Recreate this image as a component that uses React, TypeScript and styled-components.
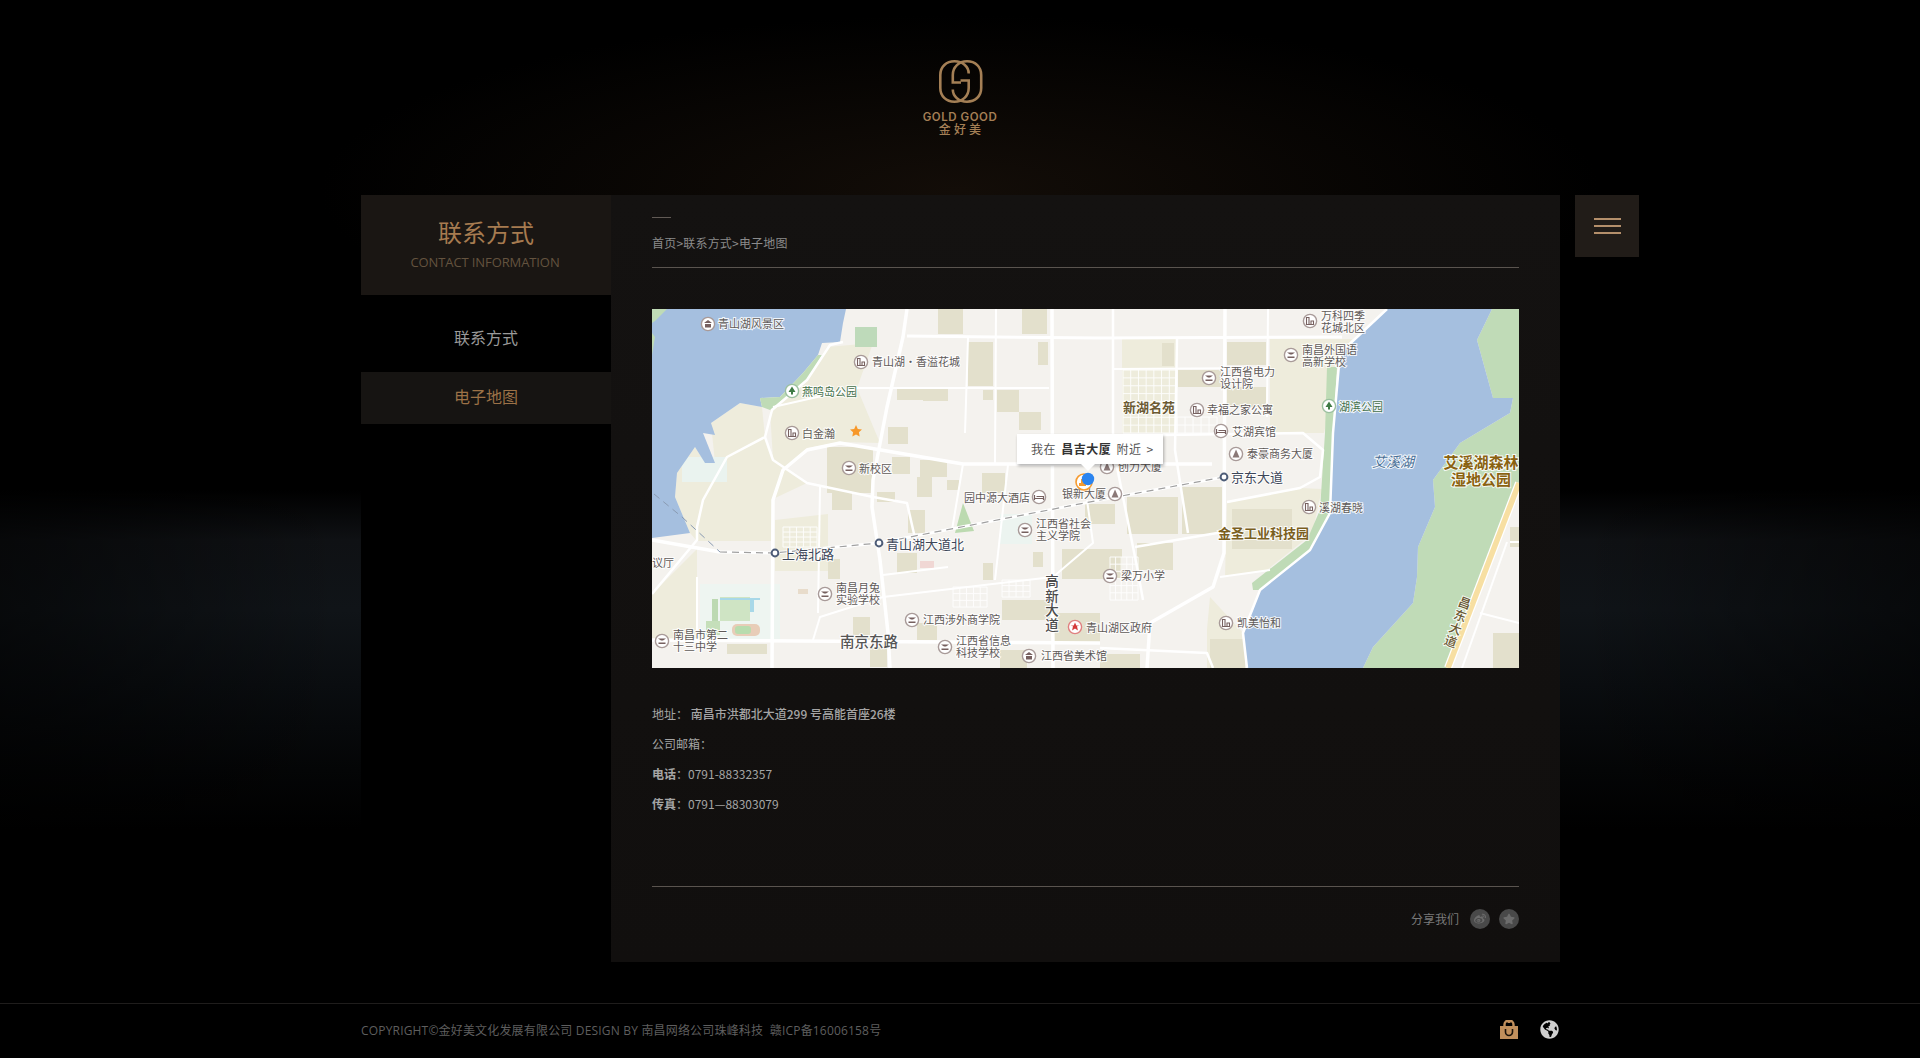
import React from "react";
import styled, { createGlobalStyle } from "styled-components";
import { FaWeibo, FaStar, FaGlobeAmericas } from "react-icons/fa";

const CJK = `"Noto Sans CJK SC", "Open Sans", sans-serif`;

const Global = createGlobalStyle`
  html, body { margin: 0; padding: 0; background: #000; }
  body { font-family: "Open Sans", ${CJK}; overflow: hidden; }
  * { box-sizing: border-box; }
`;

const Page = styled.div`
  width: 1920px;
  height: 1058px;
  overflow: hidden;
  background:
    linear-gradient(90deg, rgba(0, 0, 0, 0.55) 0, rgba(0, 0, 0, 0) 340px, rgba(0, 0, 0, 0) 1580px, rgba(0, 0, 0, 0.55) 100%),
    radial-gradient(ellipse 640px 175px at 50% 190px, #130d08 0%, rgba(20, 13, 8, 0) 100%),
    linear-gradient(180deg, #000 490px, #0f1114 540px, #101418 610px, #0a0d10 685px, #040506 770px, #000 830px);
`;
const Header = styled.header`
  height: 195px;
  padding-top: 60px;
  display: flex;
  flex-direction: column;
  align-items: center;
`;
const LogoMark = styled.svg`
  display: block;
  margin-left: 1px;
`;
const LogoEn = styled.div`
  margin-top: 8px;
  font: 600 11.5px/12px Inter, sans-serif;
  letter-spacing: 0.55px;
  color: #a47f55;
`;
const LogoCn = styled.div`
  margin-top: -1px;
  font: 500 12px/13px ${CJK};
  letter-spacing: 3.2px;
  padding-left: 3px;
  color: #a47f55;
`;
const Main = styled.main`
  display: flex;
  margin-left: 361px;
`;
const Sidebar = styled.aside`
  width: 250px;
  height: 767px;
  background: #000;
`;
const SideHead = styled.div`
  height: 100px;
  background: #1a1613;
  text-align: center;
  padding-top: 21px;
`;
const SideTitle = styled.h2`
  margin: 0;
  font: 400 24px/32px ${CJK};
  color: #a67b50;
`;
const SideSub = styled.div`
  margin-top: 5px;
  padding-right: 2px;
  font: 400 13px/18px "Open Sans", sans-serif;
  letter-spacing: -0.1px;
  color: #64533f;
`;
const SideItem = styled.div<{ $active?: boolean; $h: number }>`
  height: ${(p) => p.$h}px;
  display: flex;
  align-items: center;
  justify-content: center;
  padding: ${(p) => (p.$active ? "0 0 4px" : "7px 0 0")};
  font: 400 16px ${CJK};
  color: ${(p) => (p.$active ? "#9c7247" : "#9a9a9a")};
  background: ${(p) => (p.$active ? "#161412" : "transparent")};
`;
const Panel = styled.section`
  width: 949px;
  height: 767px;
  padding: 22px 41px 0;
  background: linear-gradient(180deg, #141211 0%, #110f0e 100%);
`;
const Dash = styled.div`
  width: 19px;
  height: 1px;
  background: #615a55;
`;
const Crumb = styled.div`
  margin-top: 13px;
  padding-bottom: 12px;
  border-bottom: 1px solid #5a544f;
  font: 400 12px/24px ${CJK};
  letter-spacing: 0.2px;
  color: #8b8b8b;
`;
const MapBox = styled.div`
  position: relative;
  margin-top: 41px;
  width: 867px;
  height: 359px;
  overflow: hidden;
  background: #f4f2ee;
`;
const MapSvg = styled.svg`
  display: block;
  width: 867px;
  height: 359px;
`;
const MapText = styled.text<{ $s?: number; $c?: string; $w?: number; $i?: boolean; $v?: boolean }>`
  font-family: ${CJK};
  font-size: ${(p) => p.$s ?? 11}px;
  font-weight: ${(p) => p.$w ?? 400};
  font-style: ${(p) => (p.$i ? "italic" : "normal")};
  fill: ${(p) => p.$c ?? "#5f5a58"};
  stroke: rgba(255, 255, 255, 0.85);
  stroke-width: 2px;
  paint-order: stroke;
  ${(p) => (p.$v ? "writing-mode: vertical-rl; letter-spacing: 1.2px;" : "")}
`;
const Bubble = styled.div`
  position: absolute;
  left: 365px;
  top: 125px;
  width: 146px;
  height: 30px;
  padding: 0 0 2px 14px;
  background: #fff;
  box-shadow: 1px 2px 3px rgba(0, 0, 0, 0.3);
  display: flex;
  align-items: center;
  font: 400 12px ${CJK};
  letter-spacing: 0.5px;
  word-spacing: 2px;
  color: #555;
  white-space: pre;
  &::after {
    content: "";
    position: absolute;
    left: 64px;
    bottom: -7px;
    width: 0;
    height: 0;
    border-left: 7px solid transparent;
    border-right: 7px solid transparent;
    border-top: 7px solid #fff;
  }
`;
const BubbleName = styled.b`
  font-weight: 700;
  color: #333;
`;
const Info = styled.div`
  margin-top: 31px;
  font: 400 12px/30px ${CJK};
  color: #a5a5a5;
`;
const InfoLine = styled.div`
  height: 30px;
  white-space: pre;
`;
const InfoLabel = styled.b`
  font-weight: 700;
`;
const InfoMed = styled.span`
  font-weight: 500;
`;
const ShareRow = styled.div`
  margin-top: 67px;
  border-top: 1px solid #5a544f;
  padding-top: 22px;
  display: flex;
  justify-content: flex-end;
  align-items: center;
  gap: 9px;
  font: 400 12px/20px ${CJK};
  color: #7a7a7a;
`;
const ShareText = styled.span`
  margin-right: 2px;
`;
const ShareBtn = styled.span`
  width: 20px;
  height: 20px;
  border-radius: 50%;
  background: #494949;
  color: #6c6c6c;
  display: flex;
  align-items: center;
  justify-content: center;
  font-size: 12px;
`;
const MenuBtn = styled.button`
  width: 64px;
  height: 62px;
  margin-left: 15px;
  padding: 0;
  border: 0;
  background: #211c18;
  display: flex;
  flex-direction: column;
  align-items: center;
  justify-content: center;
  gap: 5px;
`;
const MenuLine = styled.span`
  display: block;
  width: 27px;
  height: 2px;
  background: #b48f6b;
`;
const Footer = styled.footer`
  margin-top: 41px;
  height: 55px;
  border-top: 1px solid #1f1d1c;
  padding: 0 361px 3px 361px;
  display: flex;
  align-items: center;
  justify-content: space-between;
`;
const Copy = styled.div`
  font: 400 12px "Open Sans", ${CJK};
  letter-spacing: 0.18px;
  color: #5e5e5e;
  white-space: pre;
`;
const FootIcons = styled.div`
  display: flex;
  align-items: center;
  gap: 22px;
`;
const Globe = styled(FaGlobeAmericas)`
  width: 19px;
  height: 19px;
  color: #cfcfcf;
`;

const GPath = "M29.7 13.5C29.7 6.5 23.5 1.3 15.5 1.3C7.5 1.3 1.3 6.5 1.3 15V28C1.3 36 7 41.7 15.5 41.7C23.5 41.7 29.7 36 29.7 28V20.5H21.5";

const Logo = () => (
  <LogoMark width="44" height="43" viewBox="0 0 44 43" fill="none" stroke="#a47f55" strokeWidth="2.6">
    <path d={GPath} />
    <path d={GPath} transform="rotate(180 21.75 21.5)" />
  </LogoMark>
);

const Bag = () => (
  <svg width="18" height="19" viewBox="0 0 18 19">
    <path d="M0 6h18v13H0z" fill="#c08f5c" />
    <path d="M4.5 6V4.5a4.5 4 0 0 1 9 0V6" fill="none" stroke="#c08f5c" strokeWidth="2.4" />
    <path d="M5.5 9v3a3.5 3.5 0 0 0 7 0V9" fill="none" stroke="#1a120a" strokeWidth="1.6" />
    <path d="M7.5 0h3v3h-3z" fill="#c08f5c" />
  </svg>
);

type Pt = number[];
const pts = (a: Pt) => a.join(" ");

const Grid = ({ x, y, w, h, nx, ny }: { x: number; y: number; w: number; h: number; nx: number; ny: number }) => (
  <g stroke="#fff" strokeWidth="1" opacity="0.9">
    {Array.from({ length: nx + 1 }, (_, i) => (
      <line key={"v" + i} x1={x + (w * i) / nx} y1={y} x2={x + (w * i) / nx} y2={y + h} />
    ))}
    {Array.from({ length: ny + 1 }, (_, i) => (
      <line key={"h" + i} x1={x} y1={y + (h * i) / ny} x2={x + w} y2={y + (h * i) / ny} />
    ))}
  </g>
);

type Kind = "b" | "s" | "h" | "p" | "g" | "m" | "t";
const Poi = ({ x, y, k }: { x: number; y: number; k: Kind }) => {
  const c = k === "p" ? "#3f7a45" : k === "g" ? "#d43a3a" : "#76605f";
  return (
    <g transform={`translate(${x} ${y})`}>
      <circle r="6.6" fill="#fff" stroke={k === "p" ? "#9cc0a0" : k === "g" ? "#e08080" : "#a89a98"} strokeWidth="1.4" />
      {k === "b" && <path d="M-3.5 3.5V-3.5H-1V3.5H1V0H3.5V3.5Z" fill="none" stroke={c} strokeWidth="1.1" />}
      {k === "s" && <path d="M-4-2.5H4L1-.5H-1ZM-3.5 1.5H3.5V3H-3.5Z" fill={c} />}
      {k === "h" && <path d="M-4.5-2V3M-4.5 1.5H4.5V3M-2.5-.5H4.5V1.5" fill="none" stroke={c} strokeWidth="1.2" />}
      {k === "p" && <path d="M0-4.5L3.5 1H1V3.5H-1V1H-3.5Z" fill={c} />}
      {k === "g" && <path d="M0-4.5L1.3-1.4L4.5-1.2L2-.8L2.9 3.6L0 1.6L-2.9 3.6L-2-.8L-4.5-1.2L-1.3-1.4Z" fill={c} />}
      {k === "m" && <path d="M-4-1L0-4L4-1ZM-3 0H3V3.5H-3Z" fill={c} />}
      {k === "t" && <path d="M0-4.5L3.5 3.5H-3.5Z" fill={c} opacity="0.85" />}
    </g>
  );
};

const Station = ({ x, y }: { x: number; y: number }) => (
  <circle cx={x} cy={y} r="3.4" fill="#fff" stroke="#4e5d78" strokeWidth="2" />
);

const TwoLines = ({ x, y, a, b }: { x: number; y: number; a: string; b: string }) => (
  <MapText x={x} y={y}>
    {a}
    <tspan x={x} dy={12}>{b}</tspan>
  </MapText>
);

const beigeAreas: Pt[] = [
  [118, 101, 155, 71, 175, 38, 221, 34, 205, 79, 228, 134, 188, 133, 155, 139, 131, 161, 121, 151],
  [59, 114, 88, 94, 110, 98, 113, 128, 75, 148, 63, 154],
  [25, 164, 43, 138, 53, 154, 75, 148, 113, 128, 121, 151, 155, 174, 121, 190, 120, 232, 45, 232, 38, 224, 23, 188],
  [618, 30, 700, 30, 686, 58, 672, 124, 618, 124],
  [575, 194, 648, 179, 670, 180, 660, 225, 615, 261, 573, 268],
  [558, 288, 591, 324, 595, 359, 555, 359, 555, 320],
  [123, 211, 176, 205, 176, 262, 123, 262],
  [470, 30, 525, 30, 525, 124, 470, 124],
  [0, 285, 45, 240, 45, 331, 0, 331],
];
const blocks: Pt[] = [
  [286, 0, 25, 25], [370, 0, 25, 25], [316, 33, 25, 44], [386, 33, 10, 23], [345, 81, 22, 22], [367, 103, 22, 18],
  [236, 118, 20, 17], [245, 79, 27, 12], [271, 79, 25, 13], [331, 81, 10, 10], [175, 138, 46, 46], [240, 148, 18, 17],
  [268, 151, 27, 17], [265, 168, 15, 20], [295, 171, 12, 10], [330, 164, 23, 20], [225, 183, 18, 10], [256, 201, 17, 23],
  [180, 184, 20, 17], [331, 254, 10, 17], [381, 243, 10, 15], [176, 250, 12, 20], [245, 244, 20, 20], [201, 308, 17, 23],
  [218, 338, 17, 20], [350, 291, 48, 20], [401, 304, 47, 30], [265, 314, 20, 17], [348, 341, 27, 18], [75, 335, 40, 10],
  [575, 33, 39, 23], [575, 78, 39, 20], [526, 61, 43, 17], [475, 188, 51, 37], [530, 178, 40, 47], [580, 200, 60, 40],
  [485, 234, 36, 27], [510, 34, 12, 23], [558, 330, 35, 29], [448, 345, 40, 14],
  [841, 324, 26, 35], [858, 218, 9, 20], [410, 240, 60, 30], [433, 195, 30, 20],
];
const roads: { p: Pt; w: number }[] = [
  { p: [255, 0, 251, 28, 235, 98, 221, 171, 220, 198, 228, 251, 236, 324, 238, 359], w: 3.5 },
  { p: [560, 155, 448, 155, 311, 155, 188, 134, 155, 141, 131, 161, 121, 191, 120, 359], w: 3.5 },
  { p: [191, 33, 178, 36, 155, 71, 120, 101, 113, 128, 75, 148, 51, 191, 45, 218, 45, 231, 0, 285], w: 2.5 },
  { p: [113, 128, 121, 151, 155, 174, 221, 188, 255, 194, 265, 238], w: 2.5 },
  { p: [255, 27, 448, 29, 690, 28], w: 3 },
  { p: [121, 98, 205, 79, 397, 79], w: 2 },
  { p: [344, 0, 343, 155], w: 2 },
  { p: [400, 0, 401, 359], w: 3.5 },
  { p: [316, 29, 313, 124], w: 2 },
  { p: [311, 155, 300, 221], w: 2 },
  { p: [356, 156, 343, 271], w: 2 },
  { p: [231, 266, 296, 258], w: 2 },
  { p: [231, 288, 401, 268, 441, 234, 435, 191], w: 2 },
  { p: [0, 331, 448, 334], w: 3.5 },
  { p: [45, 268, 45, 331], w: 2 },
  { p: [161, 331, 168, 308, 231, 288], w: 2 },
  { p: [168, 178, 166, 304], w: 2 },
  { p: [573, 0, 572, 244, 561, 278, 498, 314, 495, 359], w: 3.5 },
  { p: [461, 0, 461, 124, 465, 158, 485, 258, 491, 291], w: 2.5 },
  { p: [525, 29, 523, 141, 536, 224], w: 2.5 },
  { p: [616, 0, 615, 108], w: 2 },
  { p: [461, 60, 618, 59], w: 2 },
  { p: [511, 126, 651, 124, 671, 141, 668, 168, 648, 179, 575, 193], w: 2.5 },
  { p: [483, 238, 571, 223], w: 2.5 },
  { p: [568, 268, 618, 261], w: 2 },
  { p: [448, 339, 555, 344, 561, 359], w: 2.5 },
  { p: [735, 0, 688, 44, 681, 124, 678, 204, 658, 241, 608, 281, 591, 324, 595, 359], w: 2.5 },
  { p: [0, 231, 68, 243], w: 3.5 },
  { p: [810, 359, 855, 233], w: 2 },
  { p: [828, 304, 867, 314], w: 2 },
  { p: [858, 233, 867, 233], w: 2 },
];

const MapDrawing = () => (
  <MapSvg viewBox="0 0 867 359">
    <rect width="867" height="359" fill="#f4f2ee" />
    {beigeAreas.map((a, i) => (
      <polygon key={i} points={pts(a)} fill="#eeecdc" />
    ))}
    <rect x="48" y="275" width="80" height="55" fill="#eef5f1" />
    <rect x="30" y="148" width="45" height="25" fill="#eaf3ef" />
    <rect x="348" y="205" width="32" height="30" fill="#ecf4f0" />
    <rect x="60" y="290" width="6" height="24" fill="#bcd9b2" />
    <rect x="68" y="288" width="30" height="24" fill="#cfe4c4" />
    <rect x="68" y="289" width="40" height="2" fill="#a8d8e8" />
    <rect x="98" y="289" width="4" height="14" fill="#a8d8e8" />
    <rect x="80" y="315" width="28" height="12" rx="5" fill="#e8cdb8" />
    <rect x="83" y="317" width="16" height="8" rx="3" fill="#b8dcae" />
    <rect x="54" y="312" width="14" height="14" fill="#c5dfba" />
    <rect x="268" y="252" width="14" height="7" fill="#f0d7d4" />
    <rect x="146" y="280" width="10" height="5" fill="#e8dccb" />
    {blocks.map((b, i) => (
      <rect key={i} x={b[0]} y={b[1]} width={b[2]} height={b[3]} fill="#e3e0cc" />
    ))}
    <rect x="203" y="18" width="22" height="20" fill="#bedaba" />
    <polygon points="303,224 311,194 322,222" fill="#bcdab0" />
    <polygon points="0,0 194,0 191,14 188,33 170,34 166,46 151,64 128,88 108,89 110,98 88,94 59,114 63,126 51,124 63,154 53,154 43,138 25,164 23,188 38,224 0,229" fill="#a5bfdf" />
    <polygon points="0,0 15,0 3,12 0,14" fill="#bfdbb6" />
    <polygon points="0,24 3,28 0,46" fill="#bfdbb6" />
    <polygon points="166,46 151,64 128,88 108,89 110,98 118,101 155,71 170,46" fill="#bfdbb6" />
    <polygon points="840,0 867,0 867,174 796,359 711,359 721,338 761,294 765,268 766,238 783,198 781,171 808,134 858,104 861,89 841,89 825,31" fill="#c0dbb7" />
    <polygon points="735,0 688,44 681,124 678,204 658,241 608,281 591,324 595,359 711,359 721,338 761,294 765,268 766,238 783,198 781,171 808,134 858,104 861,89 841,89 825,31 840,0" fill="#a5bfdf" />
    <polygon points="675,58 685,58 681,124 678,204 658,241 608,281 601,281 600,274 655,231 668,201 673,124" fill="#bfdbb6" />
    <Grid x={471} y={61} w={54} h={63} nx={7} ny={8} />
    <Grid x={131} y={218} w={34} h={20} nx={5} ny={4} />
    <Grid x={458} y={248} w={28} h={43} nx={5} ny={6} />
    <Grid x={301} y={278} w={34} h={20} nx={5} ny={3} />
    <Grid x={350} y={271} w={28} h={17} nx={4} ny={3} />
    <Grid x={525} y={108} w={40} h={16} nx={5} ny={2} />
    {roads.map((r, i) => (
      <polyline key={i} points={pts(r.p)} fill="none" stroke="#fff" strokeWidth={r.w} strokeLinejoin="round" />
    ))}
    <polyline points="796,359 867,174" fill="none" stroke="#fff" strokeWidth="8" />
    <polyline points="796,359 867,174" fill="none" stroke="#f7dfa2" strokeWidth="5.5" />
    <polyline points="68,243 122,244 227,234 448,191 572,168" fill="none" stroke="#fff" strokeWidth="3" />
    <polyline points="68,243 122,244 227,234 448,191 572,168" fill="none" stroke="#a0a0a0" strokeWidth="1.2" strokeDasharray="7 5" />
    <polyline points="2,185 30,208 68,243" fill="none" stroke="#8a9bb2" strokeWidth="1" strokeDasharray="7 5" />

    <Poi x={56} y={15} k="m" /><MapText x={66} y={19}>青山湖风景区</MapText>
    <Poi x={209} y={53} k="b" /><MapText x={220} y={57}>青山湖·香溢花城</MapText>
    <Poi x={140} y={82} k="p" /><MapText x={150} y={87} $c="#44704a">燕鸣岛公园</MapText>
    <Poi x={140} y={124} k="b" /><MapText x={150} y={129}>白金瀚</MapText>
    <Poi x={197} y={159} k="s" /><MapText x={207} y={164}>新校区</MapText>
    <Poi x={387} y={188} k="h" /><MapText x={312} y={193}>园中源大酒店</MapText>
    <Poi x={373} y={221} k="s" /><TwoLines x={384} y={219} a="江西省社会" b="主义学院" />
    <Poi x={173} y={285} k="s" /><TwoLines x={184} y={283} a="南昌月兔" b="实验学校" />
    <Poi x={260} y={311} k="s" /><MapText x={271} y={315}>江西涉外商学院</MapText>
    <Poi x={10} y={332} k="s" /><TwoLines x={21} y={330} a="南昌市第二" b="十三中学" />
    <Poi x={293} y={338} k="s" /><TwoLines x={304} y={336} a="江西省信息" b="科技学校" />
    <Poi x={377} y={347} k="m" /><MapText x={389} y={351}>江西省美术馆</MapText>
    <Poi x={423} y={318} k="g" /><MapText x={434} y={323}>青山湖区政府</MapText>
    <MapText x={0} y={258}>议厅</MapText>
    <Station x={123} y={244} /><MapText x={130} y={250} $s={13} $c="#3c4658">上海北路</MapText>
    <Station x={227} y={234} /><MapText x={234} y={240} $s={13} $c="#3c4658">青山湖大道北</MapText>
    <Station x={572} y={168} /><MapText x={579} y={173} $s={13} $c="#3c4658">京东大道</MapText>
    <MapText x={188} y={338} $s={14.5} $w={500} $c="#555">南京东路</MapText>
    <MapText x={400} y={265} $s={13.5} $w={500} $c="#4c4c4c" $v>高新大道</MapText>
    <MapText x={410} y={189}>银新大厦</MapText><Poi x={463} y={185} k="t" />
    <Poi x={455} y={158} k="t" /><MapText x={466} y={162}>创力大厦</MapText>
    <Poi x={658} y={12} k="b" /><TwoLines x={669} y={11} a="万科四季" b="花城北区" />
    <Poi x={639} y={46} k="s" /><TwoLines x={650} y={45} a="南昌外国语" b="高新学校" />
    <Poi x={557} y={69} k="s" /><TwoLines x={568} y={67} a="江西省电力" b="设计院" />
    <MapText x={471} y={103} $s={13} $w={700} $c="#6b5a33">新湖名苑</MapText>
    <Poi x={545} y={101} k="b" /><MapText x={555} y={105}>幸福之家公寓</MapText>
    <Poi x={677} y={97} k="p" /><MapText x={687} y={102} $c="#44704a">湖滨公园</MapText>
    <Poi x={569} y={122} k="h" /><MapText x={580} y={127}>艾湖宾馆</MapText>
    <Poi x={584} y={145} k="t" /><MapText x={595} y={149}>泰豪商务大厦</MapText>
    <MapText x={720} y={158} $s={14} $i $c="#4a6f96">艾溪湖</MapText>
    <MapText x={829} y={159} $s={15} $w={700} $c="#8a6210" textAnchor="middle">
      艾溪湖森林
      <tspan x={829} dy={17}>湿地公园</tspan>
    </MapText>
    <Poi x={657} y={198} k="b" /><MapText x={667} y={203}>溪湖春晓</MapText>
    <MapText x={566} y={229} $s={13} $w={700} $c="#7a5f1e">金圣工业科技园</MapText>
    <Poi x={458} y={267} k="s" /><MapText x={469} y={271}>梁万小学</MapText>
    <Poi x={574} y={314} k="b" /><MapText x={585} y={318}>凯美怡和</MapText>
    <MapText x={815} y={288} $s={12.5} $w={500} $c="#6b5a33" $v transform="rotate(20 815 288)">昌东大道</MapText>
    <path d="M204 116l1.8 3.9 4.2.5-3.1 2.9.8 4.2-3.7-2.1-3.7 2.1.8-4.2-3.1-2.9 4.2-.5z" fill="#f7982a" />
    <circle cx="432" cy="173" r="8" fill="#fff" stroke="#f59b30" strokeWidth="1.6" />
    <path d="M427 174h7v3h-7zM429 170h3v4h-3z" fill="#f59b30" />
    <circle cx="436" cy="170" r="6.2" fill="#2b84ef" />
  </MapSvg>
);

export default function App() {
  return (
    <Page>
      <Global />
      <Header>
        <Logo />
        <LogoEn>GOLD GOOD</LogoEn>
        <LogoCn>金好美</LogoCn>
      </Header>
      <Main>
        <Sidebar>
          <SideHead>
            <SideTitle>联系方式</SideTitle>
            <SideSub>CONTACT INFORMATION</SideSub>
          </SideHead>
          <SideItem $h={77}>联系方式</SideItem>
          <SideItem $h={52} $active>电子地图</SideItem>
        </Sidebar>
        <Panel>
          <Dash />
          <Crumb>首页&gt;联系方式&gt;电子地图</Crumb>
          <MapBox>
            <MapDrawing />
            <Bubble>
              我在 <BubbleName>昌吉大厦</BubbleName> 附近 &gt;
            </Bubble>
          </MapBox>
          <Info>
            <InfoLine>地址： <InfoMed>南昌市洪都北大道299 号高能首座26楼</InfoMed></InfoLine>
            <InfoLine>公司邮箱：</InfoLine>
            <InfoLine><InfoLabel>电话</InfoLabel>：0791-88332357</InfoLine>
            <InfoLine><InfoLabel>传真</InfoLabel>：0791—88303079</InfoLine>
          </Info>
          <ShareRow>
            <ShareText>分享我们</ShareText>
            <ShareBtn><FaWeibo /></ShareBtn>
            <ShareBtn><FaStar /></ShareBtn>
          </ShareRow>
        </Panel>
        <MenuBtn aria-label="menu">
          <MenuLine />
          <MenuLine />
          <MenuLine />
        </MenuBtn>
      </Main>
      <Footer>
        <Copy>COPYRIGHT©金好美文化发展有限公司 DESIGN BY 南昌网络公司珠峰科技  赣ICP备16006158号</Copy>
        <FootIcons>
          <Bag />
          <Globe />
        </FootIcons>
      </Footer>
    </Page>
  );
}
